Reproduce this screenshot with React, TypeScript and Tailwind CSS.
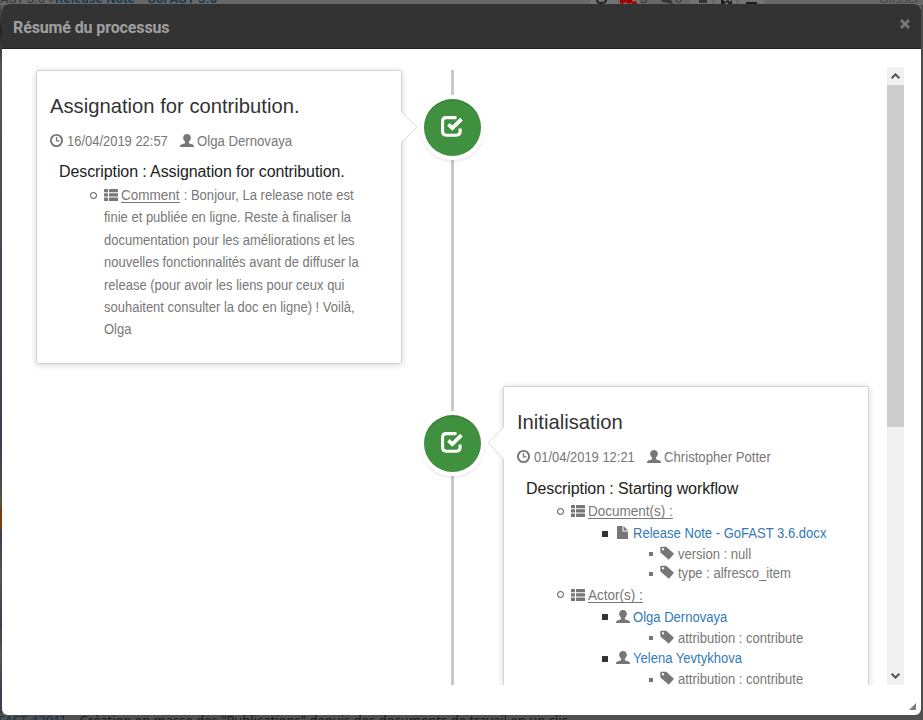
import type { ReactNode } from "react";

function ClockIcon() {
  return (
    <svg className="-mt-[2px] h-[14px] w-[13px] shrink-0" viewBox="0 0 13 14" fill="none" stroke="#777777">
      <circle cx="6.500" cy="7.500" r="5.600" strokeWidth="1.900" />
      <path d="M6.500 4.100v3.700h3" strokeWidth="1.300" />
    </svg>
  );
}

function UserIcon() {
  return (
    <svg className="-mt-[2px] h-[13px] w-[14px] shrink-0" viewBox="0 0 14 13" fill="#777777">
      <path d="M7 0C4.800 0 3.300 1.300 3.300 3.300c0 .5-.3.600-.2 1.100.1.600.400.800.600 1.100.2.900.700 1.700 1.400 2.200v1.200C4.900 9.600 2.500 9.900 1.200 10.500.2 11 0 11.700 0 13h14c0-1.300-.2-2-1.200-2.500-1.300-.6-3.700-.9-3.900-1.600V7.700c.7-.5 1.200-1.300 1.400-2.200.2-.3.500-.5.600-1.100.1-.5-.2-.6-.2-1.100C10.700 1.300 9.200 0 7 0Z" />
    </svg>
  );
}

function ListIcon() {
  return (
    <svg className="h-[12px] w-[14px] shrink-0" viewBox="0 0 14 12" fill="#777777">
      <rect x="0" y="0" width="4" height="3.300" rx=".5" />
      <rect x="5" y="0" width="9" height="3.300" rx=".5" />
      <rect x="0" y="4.300" width="4" height="3.300" rx=".5" />
      <rect x="5" y="4.300" width="9" height="3.300" rx=".5" />
      <rect x="0" y="8.600" width="4" height="3.300" rx=".5" />
      <rect x="5" y="8.600" width="9" height="3.300" rx=".5" />
    </svg>
  );
}

function FileIcon() {
  return (
    <svg className="-mt-[2px] ml-[1px] h-[13px] w-[11px] shrink-0" viewBox="0 0 11 13" fill="#777777">
      <path d="M.5 0H5.500v5.500H11V12.500q0 .5-.5.5H.5q-.5 0-.5-.5V.5Q0 0 .5 0Z" />
      <path d="M6.500 0 11 4.500H6.500Z" />
    </svg>
  );
}

function TagIcon() {
  return (
    <svg className="-mt-[3px] h-[14px] w-[14px] shrink-0" viewBox="0 0 14 14" fill="#777777">
      <path
        fillRule="evenodd"
        d="M.3 1.500Q.3.700 1.100.7L6.200.8 13.500 7.200q.5.500.1 1L9.300 13.200q-.5.500-1 0L.4 6.500ZM3 2.100a1.150 1.150 0 1 0 .01 0Z"
      />
    </svg>
  );
}

function CheckIcon() {
  return (
    <svg className="h-[22px] w-[22px]" viewBox="0 0 22 22" fill="none" stroke="#fff">
      <path d="M15.500 1.600H5.200Q1.600 1.600 1.600 5.200V15.600Q1.600 19.200 5.200 19.200H15.500Q19.100 19.200 19.100 15.600V12.500" strokeWidth="3.100" />
      <path d="M7.400 8.400 11.300 12.100 20.500 3.100" strokeWidth="3.700" />
    </svg>
  );
}

function Node() {
  return (
    <div className="z-10 flex h-[65px] w-[65px] shrink-0 items-start justify-start pl-[4px] pt-[4px]">
      <div className="flex h-[57px] w-[57px] items-center justify-center rounded-full bg-[#3f903f] pb-[2px] pr-[1px] shadow-[0_0_0_4px_#fff,inset_0_2px_0_rgba(0,0,0,0.08),0_3px_0_4px_rgba(0,0,0,0.05)]">
        <CheckIcon />
      </div>
    </div>
  );
}

function Meta({ date, name }: { date: string; name: string }) {
  return (
    <div className="mt-[12px] flex h-[20px] items-center text-[14px] text-[#777777]">
      <ClockIcon />
      <span className="ml-[4px] w-[101px] origin-left scale-x-[0.925]">{date}</span>
      <span className="ml-[12px] flex items-center gap-[3px]">
        <UserIcon />
        <span className="origin-left scale-x-[0.94]">{name}</span>
      </span>
    </div>
  );
}

function Section({ children }: { children: ReactNode }) {
  return (
    <div className="flex h-[22.400px] items-center pl-[40px]">
      <span className="mr-[7px] h-[7px] w-[7px] rounded-full border border-[#444]" />
      <ListIcon />
      <span className="ml-[3px] flex whitespace-pre">{children}</span>
    </div>
  );
}

function Label({ children }: { children: ReactNode }) {
  return (
    <span className="h-[16px] origin-left scale-x-[0.965] border-b border-[#777] leading-[16px]">{children}</span>
  );
}

function Entry({ icon, children }: { icon: ReactNode; children: ReactNode }) {
  return (
    <div className="flex h-[22.400px] items-center pl-[85px]">
      <span className="mr-[8px] h-[6px] w-[6px] bg-[#333]" />
      <span className="flex w-[17px]">{icon}</span>
      <span className="origin-left scale-x-[0.932] text-[#337ab7]">{children}</span>
    </div>
  );
}

function Detail({ children }: { children: ReactNode }) {
  return (
    <div className="flex h-[19.400px] items-center pl-[132px]">
      <span className="mr-[7px] h-[4px] w-[4px] bg-[#777]" />
      <TagIcon />
      <span className="ml-[4px] origin-left scale-x-[0.93]">{children}</span>
    </div>
  );
}

const comment = [
  "finie et publiée en ligne. Reste à finaliser la",
  "documentation pour les améliorations et les",
  "nouvelles fonctionnalités avant de diffuser la",
  "release (pour avoir les liens pour ceux qui",
  "souhaitent consulter la doc en ligne) ! Voilà,",
  "Olga",
];

function Heading({ title, description }: { title: string; description: ReactNode }) {
  return (
    <>
      <h2 className="mt-[22px] origin-left scale-x-[0.963] text-[21px] leading-[26px] text-[#333]">{title}</h2>
      {description}
    </>
  );
}

export default function App() {
  return (
    <div className="relative h-[720px] w-[923px] overflow-hidden bg-[#555] font-['Liberation_Sans',Arial,sans-serif]">
      <div className="flex h-full flex-col whitespace-pre">
        <div className="flex h-[5px] shrink-0 items-end bg-[#686868] text-[13px] leading-[12px] text-[#333]">
          <span className="w-[55px] shrink-0 font-['Roboto',sans-serif]">AST 3.6 »</span>
          <span className="w-[535px] shrink-0 font-['Roboto',sans-serif] font-bold tracking-[0.18px] text-[#183850]">
            Release Note - GoFAST 3.6
          </span>
          <span className="flex h-[5px] w-[50px] shrink-0 items-start">
            <svg className="h-[5px] w-[50px]" viewBox="0 0 50 5">
              <path d="M0 0H28V5H0ZM30 0H50V5H30Z" fill="#747474" />
              <path d="M7 0q0 3 4 3 5 0 5-3" fill="none" stroke="#222" strokeWidth="2" />
              <path d="M30 0H42L43 2 46 1 47 4H43L41 3 38 4 36 2 32 4 30 3Z" fill="#a00000" />
            </svg>
          </span>
          <span className="w-[20px] shrink-0">3</span>
          <span className="flex h-[5px] w-[15px] shrink-0 items-start">
            <svg className="h-[5px] w-[15px]" viewBox="0 0 15 5" fill="#333">
              <path d="M1 0H11L13 4 8 3 3 2Z" />
            </svg>
          </span>
          <span className="w-[15px] shrink-0">0</span>
          <span className="flex h-[5px] w-[189px] shrink-0 items-start">
            <svg className="h-[5px] w-[189px]" viewBox="0 0 189 5" fill="#1c1c1c">
              <path d="M0 0H22V5H0ZM25 0H46V5H25ZM49 0H74V5H49Z" fill="#747474" />
              <path d="M9 0H17V3H9Z" fill="#333" />
              <path d="M31 0H33L35 2 38 0 40 2 42 0V4H39L37 2 34 4H31Z" />
              <path d="M56 2H67V4H56Z" />
            </svg>
          </span>
          <span className="text-[#444]">Glisser</span>
        </div>
        <div className="flex flex-1 justify-between">
          <div className="w-[2px] bg-[linear-gradient(to_bottom,#555_0,#222_25px,#555_60px,#3d3d52_440px,#554_498px,#7a3a10_506px,#803a10_518px,#3d3d52_530px,#555_570px,#3d3d52_620px,#555_650px,#3d3d52_690px)]" />
          <div className="w-[2px] bg-[#4c4c4c]" />
        </div>
        <div className="flex h-[6px] shrink-0 items-start bg-[#505050] pt-[1px] font-['Noto_Sans',sans-serif] text-[13px] leading-[11px] text-[#1c1c1c]">
          <span className="-ml-[2px] w-[74px] shrink-0 text-[#14304a]">FAST-4201]</span>
          <span>- Création en masse des "Publications" depuis des documents de travail en un clic</span>
        </div>
      </div>

      <div className="absolute left-[2px] top-[4px] flex h-[711px] w-[919px] flex-col overflow-hidden rounded-[6px] bg-white">
        <header className="flex h-[45px] shrink-0 items-center justify-between border-b border-[#222] bg-[#333] px-[11px]">
          <h1 className="pt-[3px] font-['Roboto',sans-serif] text-[16px] font-bold tracking-[-0.12px] text-[#a0a0a0]">
            Résumé du processus
          </h1>
          <svg className="mb-[4px] h-[10px] w-[10px]" viewBox="0 0 10 10" stroke="#777" strokeWidth="2.800">
            <path d="M1 1 9 9M9 1 1 9" />
          </svg>
        </header>

        <div className="mt-[18px] flex h-[618px] shrink-0 overflow-hidden pl-[34px] pr-[17px]">
          <div className="flex flex-1 pt-[3px]">
            <section className="h-[294px] w-[366px] shrink-0 rounded-[2px] border border-[#d4d4d4] px-[13px] text-[14px] whitespace-nowrap text-[#777777] shadow-[0_1px_6px_rgba(0,0,0,0.175)]">
              <Heading
                title="Assignation for contribution."
                description={<Meta date="16/04/2019 22:57" name="Olga Dernovaya" />}
              />
              <h3 className="mt-[10px] pl-[9px] text-[16px] leading-[21px] tracking-[-0.1px] text-[#222]">
                Description : Assignation for contribution.
              </h3>
              <div className="mt-[2px]">
                <Section>
                  <Label>Comment</Label>
                  <span className="-ml-[2px] origin-left scale-x-[0.933] leading-[16px]">
                    {" : Bonjour, La release note est"}
                  </span>
                </Section>
                <div className="ml-[54px] origin-left scale-x-[0.928]">
                  {comment.map((line) => (
                    <p key={line} className="leading-[22.400px]">
                      {line}
                    </p>
                  ))}
                </div>
              </div>
            </section>

            <div className="relative flex w-[101px] shrink-0 flex-col items-center">
              <span className="h-[25px] w-[3px] bg-[#c8c8c8]" />
              <Node />
              <span className="h-[251px] w-[3px] bg-[#c8c8c8]" />
              <Node />
              <span className="w-[3px] flex-1 bg-[#c8c8c8]" />
              <svg className="absolute left-[-1px] top-[40px] h-[34px] w-[17px]" viewBox="0 0 17 34" fill="#fff" stroke="#dcdcdc">
                <path d="M0 1 16 17 0 33" />
              </svg>
              <svg className="absolute right-[-1px] top-[356px] h-[34px] w-[17px]" viewBox="0 0 17 34" fill="#fff" stroke="#dcdcdc">
                <path d="M17 1 1 17 17 33" />
              </svg>
            </div>

            <section className="mt-[316px] h-[360px] w-[366px] shrink-0 rounded-[2px] border border-[#d4d4d4] px-[13px] text-[14px] whitespace-nowrap text-[#777777] shadow-[0_1px_6px_rgba(0,0,0,0.175)]">
              <Heading
                title="Initialisation"
                description={<Meta date="01/04/2019 12:21" name="Christopher Potter" />}
              />
              <h3 className="mt-[11px] pl-[9px] text-[16px] leading-[21px] tracking-[-0.1px] text-[#222]">
                Description : Starting workflow
              </h3>
              <div className="mt-[1px]">
                <Section>
                  <Label>Document(s) :</Label>
                </Section>
                <Entry icon={<FileIcon />}>Release Note - GoFAST 3.6.docx</Entry>
                <Detail>version : null</Detail>
                <Detail>type : alfresco_item</Detail>
                <Section>
                  <Label>Actor(s) :</Label>
                </Section>
                <Entry icon={<UserIcon />}>Olga Dernovaya</Entry>
                <Detail>attribution : contribute</Detail>
                <Entry icon={<UserIcon />}>Yelena Yevtykhova</Entry>
                <Detail>attribution : contribute</Detail>
              </div>
            </section>
          </div>

          <div className="flex w-[17px] shrink-0 flex-col items-center bg-[#f0f0f0]">
            <span className="flex h-[18px] items-center">
              <svg className="h-[6px] w-[9px]" viewBox="0 0 9 6" fill="none" stroke="#505050" strokeWidth="2">
                <path d="M.7 5.200 4.500 1.400 8.300 5.200" />
              </svg>
            </span>
            <span className="h-[342px] w-full bg-[#cdcdcd]" />
            <span className="mt-auto flex h-[19px] items-center">
              <svg className="h-[6px] w-[9px]" viewBox="0 0 9 6" fill="none" stroke="#505050" strokeWidth="2">
                <path d="M.7.800 4.500 4.600 8.300.800" />
              </svg>
            </span>
          </div>
        </div>

        <div className="flex flex-1 items-end justify-end pb-[5px] pr-[5px]">
          <svg className="h-[7px] w-[7px]" viewBox="0 0 7 7" fill="#808080">
            <path d="M7 0V7H0Z" />
          </svg>
        </div>
      </div>
    </div>
  );
}
